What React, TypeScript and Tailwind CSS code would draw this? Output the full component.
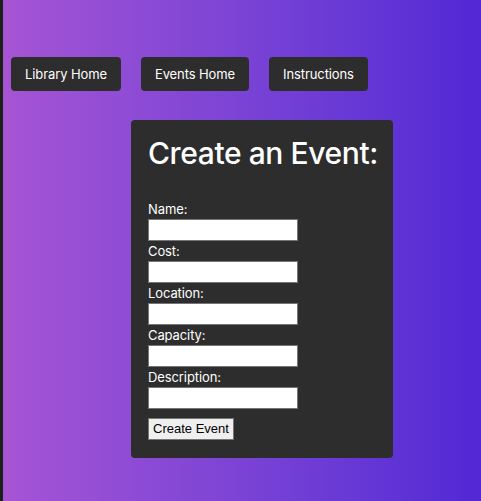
const fields = ["Name:", "Cost:", "Location:", "Capacity:", "Description:"];

const navButtons = ["Library Home", "Events Home", "Instructions"];

export default function App() {
  return (
    <div className="flex h-[501px] w-[481px] overflow-hidden font-['Inter',sans-serif]">
      <div className="w-[3px] shrink-0 bg-[#1c2219]" />
      <div className="flex-1 bg-gradient-to-r from-[#a654d4] to-[#5227d5]">
        <nav className="flex gap-5 pl-2 pt-[57px]">
          {navButtons.map((label) => (
            <button
              key={label}
              className="h-[34px] rounded-[4px] bg-[#2d2d2d] px-[14px] pt-[2px] text-[13px] tracking-[-0.1px] text-white"
            >
              {label}
            </button>
          ))}
        </nav>

        <div className="ml-[128px] mt-[29px] w-[262px] rounded-[4px] bg-[#2d2d2d] px-[17px] pb-[18px] pt-[13px] text-white">
          <h1 className="whitespace-nowrap text-[30px] font-medium leading-[40px] tracking-[-0.4px]">
            Create an Event:
          </h1>
          <form className="mt-[26px] flex flex-col">
            {fields.map((f) => (
              <div key={f} className="flex flex-col">
                <label className="text-[13px] leading-[20px] tracking-[-0.1px]">{f}</label>
                <input
                  type="text"
                  className="h-[22px] w-[150px] border border-[#767676] bg-white px-1 text-[13px] text-black"
                />
              </div>
            ))}
            <div className="mt-[6px]">
              <button
                type="button"
                className="h-[22px] border border-[#767676] bg-[#efefef] px-[4px] font-['Liberation_Sans',sans-serif] text-[13px] text-black"
              >
                Create Event
              </button>
            </div>
          </form>
        </div>
      </div>
    </div>
  );
}
